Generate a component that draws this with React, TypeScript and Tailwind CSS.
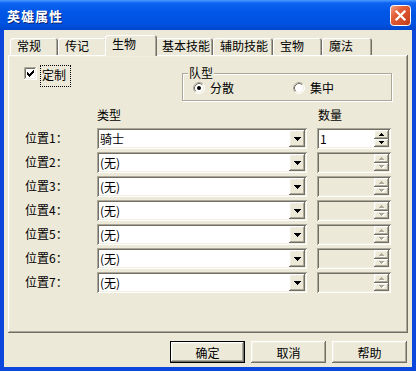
import React from "react";

const SUNKEN =
  "shadow-[inset_1px_1px_0_#aca899,inset_-1px_-1px_0_#ffffff,inset_2px_2px_0_#716f64,inset_-2px_-2px_0_#f1efe2]";
const RAISED =
  "shadow-[inset_-1px_-1px_0_#716f64,inset_1px_1px_0_#ffffff,inset_-2px_-2px_0_#aca899,inset_2px_2px_0_#f1efe2]";
const COLS = "grid grid-cols-[63px_210px_74px] gap-x-[10px]";

const tabs = [
  { label: "常规", w: "w-[48px]" },
  { label: "传记", w: "w-[49px]" },
  { label: "生物", w: "w-[52px]", active: true },
  { label: "基本技能", w: "w-[58px]" },
  { label: "辅助技能", w: "w-[60px]" },
  { label: "宝物", w: "w-[49px]" },
  { label: "魔法", w: "w-[50px]" },
];

const slots = ["骑士", "(无)", "(无)", "(无)", "(无)", "(无)", "(无)"];

function CloseButton() {
  return (
    <svg width="21" height="21" viewBox="0 0 21 21">
      <defs>
        <linearGradient id="closeGrad" x1="0" y1="0" x2="1" y2="1">
          <stop offset="0" stopColor="#f4a488" />
          <stop offset="0.35" stopColor="#e2603a" />
          <stop offset="1" stopColor="#c13a17" />
        </linearGradient>
      </defs>
      <rect x="0.5" y="0.5" width="20" height="20" rx="3" fill="url(#closeGrad)" stroke="#ffffff" />
      <path d="M6.5 6.5l8 8M14.5 6.5l-8 8" stroke="#ffffff" strokeWidth="2.2" strokeLinecap="square" />
    </svg>
  );
}

function Checkbox({ className = "" }: { className?: string }) {
  return (
    <svg width="13" height="13" viewBox="0 0 13 13" className={className}>
      <rect width="13" height="13" fill="#ffffff" />
      <path d="M0.5 12V0.5H12" stroke="#aca899" fill="none" />
      <path d="M1.5 11V1.5H11" stroke="#716f64" fill="none" />
      <path d="M0 12.5H12.5V0" stroke="#ffffff" fill="none" />
      <path d="M1 11.5H11.5V1" stroke="#f1efe2" fill="none" />
      <path
        d="M9 3h1v1h-1z M8 4h2v1h-2z M3 5h1v1h-1z M7 5h3v1h-3z M3 6h2v1h-2z M6 6h3v1h-3z M3 7h5v1h-5z M4 8h3v1h-3z M5 9h1v1h-1z"
        fill="#000000"
      />
    </svg>
  );
}

function Radio({ checked }: { checked?: boolean }) {
  return (
    <svg width="12" height="12" viewBox="0 0 12 12" className="shrink-0">
      <circle cx="6" cy="6" r="5" fill="#ffffff" />
      <path d="M2.11 9.89A5.5 5.5 0 0 1 9.89 2.11" stroke="#aca899" fill="none" />
      <path d="M9.89 2.11A5.5 5.5 0 0 1 2.11 9.89" stroke="#ffffff" fill="none" />
      <path d="M2.82 9.18A4.5 4.5 0 0 1 9.18 2.82" stroke="#716f64" fill="none" />
      <path d="M9.18 2.82A4.5 4.5 0 0 1 2.82 9.18" stroke="#f1efe2" fill="none" />
      {checked && <circle cx="6" cy="6" r="2" fill="#000000" />}
    </svg>
  );
}

function Combo({ value }: { value: string }) {
  return (
    <div className={`flex bg-white pl-[3px] pr-[2px] py-[2px] ${SUNKEN}`}>
      <span className="flex-1 leading-[17px]">{value}</span>
      <div className={`w-[16px] h-[17px] bg-[#ece9d8] flex items-center justify-center ${RAISED}`}>
        <svg width="7" height="4" viewBox="0 0 7 4">
          <path d="M0 0h7v1h-1v1h-1v1h-1v1h-1v-1h-1v-1h-1v-1h-1z" fill="#000000" />
        </svg>
      </div>
    </div>
  );
}

function SpinArrow({ up, enabled }: { up?: boolean; enabled?: boolean }) {
  const d = up ? "M2 0h1v1h1v1h1v1h-5v-1h1v-1h1z" : "M0 0h5v1h-1v1h-1v1h-1v-1h-1v-1h-1z";
  return (
    <svg width="6" height="4" viewBox="0 0 6 4">
      {!enabled && <path d={d} fill="#ffffff" transform="translate(1 1)" />}
      <path d={d} fill={enabled ? "#000000" : "#aca899"} />
    </svg>
  );
}

function Spinner({ value, enabled }: { value?: string; enabled?: boolean }) {
  return (
    <div className={`flex p-[2px] pl-[3px] ${enabled ? "bg-white" : "bg-[#ece9d8]"} ${SUNKEN}`}>
      <span className="flex-1 leading-[17px]">{value}</span>
      <div className="w-[15px] flex flex-col">
        <div className={`h-[9px] bg-[#ece9d8] flex items-center justify-center ${RAISED}`}>
          <SpinArrow up enabled={enabled} />
        </div>
        <div className={`h-[8px] bg-[#ece9d8] flex items-center justify-center ${RAISED}`}>
          <SpinArrow enabled={enabled} />
        </div>
      </div>
    </div>
  );
}

export default function App() {
  return (
    <div className="w-[416px] h-[371px] flex flex-col bg-[#0b47dc] font-['Noto_Sans_CJK_SC',sans-serif] text-[12px] leading-[15px] text-black overflow-hidden select-none">
      {/* title bar */}
      <div className="h-[30px] shrink-0 flex items-center justify-between pl-[7px] pr-[5px] bg-[linear-gradient(180deg,#4b9cff_0px,#0f63f2_3px,#0056e6_12px,#0052e0_24px,#0045cc_30px)]">
        <span className="text-white font-bold text-[13px] tracking-[1px] pt-[1px] [text-shadow:1px_1px_0_#0a2470]">
          英雄属性
        </span>
        <CloseButton />
      </div>

      <div className="flex-1 flex px-[4px] pb-[4px]">
        <div className="flex-1 flex flex-col bg-[#ece9d8]">
          {/* tabs */}
          <div className="flex items-end h-[25px] pl-[6px] pt-[5px] shrink-0">
            {tabs.map((t) =>
              t.active ? (
                <div
                  key={t.label}
                  className={`relative z-10 -mx-[2px] -mb-[1px] h-[21px] ${t.w} shrink-0 bg-[#ece9d8] rounded-t-[3px] pl-[7px] pt-[1px] shadow-[inset_1px_1px_0_#ffffff,inset_-1px_0_0_#716f64,inset_-2px_0_0_#aca899]`}
                >
                  {t.label}
                </div>
              ) : (
                <div
                  key={t.label}
                  className={`h-[17px] ${t.w} shrink-0 rounded-t-[3px] pl-[7px] shadow-[inset_1px_1px_0_#ffffff,inset_-1px_0_0_#716f64,inset_-2px_0_0_#aca899]`}
                >
                  {t.label}
                </div>
              )
            )}
          </div>

          {/* tab panel */}
          <div
            className={`ml-[4px] w-[400px] h-[278px] shrink-0 flex flex-col px-[16px] shadow-[inset_-1px_-1px_0_#716f64,inset_1px_1px_0_#ffffff,inset_-2px_-2px_0_#aca899,inset_2px_2px_0_#f1efe2]`}
          >
            <div className="flex h-[46px] shrink-0">
              <div className="flex items-start">
                <Checkbox className="mt-[12px] shrink-0" />
                <div className="mt-[10px] ml-[3px] h-[22px] w-[31px] border border-dotted border-black pl-[1px] pt-[1px]">
                  定制
                </div>
              </div>
              <div className="relative ml-auto mt-[18px] w-[210px] h-[28px] border border-[#aca899] shadow-[inset_1px_1px_0_#ffffff,1px_1px_0_#ffffff]">
                <span className="absolute left-[5px] -top-[9px] px-[1px] bg-[#ece9d8]">队型</span>
                <div className="flex items-center h-full pl-[10px] pt-[1px]">
                  <div className="flex items-center gap-[5px] w-[100px]">
                    <Radio checked />
                    <span>分散</span>
                  </div>
                  <div className="flex items-center gap-[5px]">
                    <Radio />
                    <span>集中</span>
                  </div>
                </div>
              </div>
            </div>

            <div className={`${COLS} h-[27px] pt-[6px] shrink-0`}>
              <span />
              <span>类型</span>
              <span className="pl-[1px]">数量</span>
            </div>

            <div className="flex flex-col gap-[3px]">
              {slots.map((s, i) => (
                <div key={i} className={`${COLS} h-[21px]`}>
                  <span className="self-center pl-[1px] pb-[2px]">位置{i + 1}：</span>
                  <Combo value={s} />
                  <Spinner value={i === 0 ? "1" : ""} enabled={i === 0} />
                </div>
              ))}
            </div>
          </div>

          {/* dialog buttons */}
          <div className="flex justify-end gap-[6px] pr-[5px] mt-[8px]">
            <button className={`w-[75px] h-[22px] border border-black bg-[#ece9d8] flex items-center justify-center ${RAISED}`}>
              确定
            </button>
            <button className={`w-[75px] h-[22px] bg-[#ece9d8] flex items-center justify-center ${RAISED}`}>
              取消
            </button>
            <button className={`w-[75px] h-[22px] bg-[#ece9d8] flex items-center justify-center ${RAISED}`}>
              帮助
            </button>
          </div>
        </div>
      </div>
    </div>
  );
}
